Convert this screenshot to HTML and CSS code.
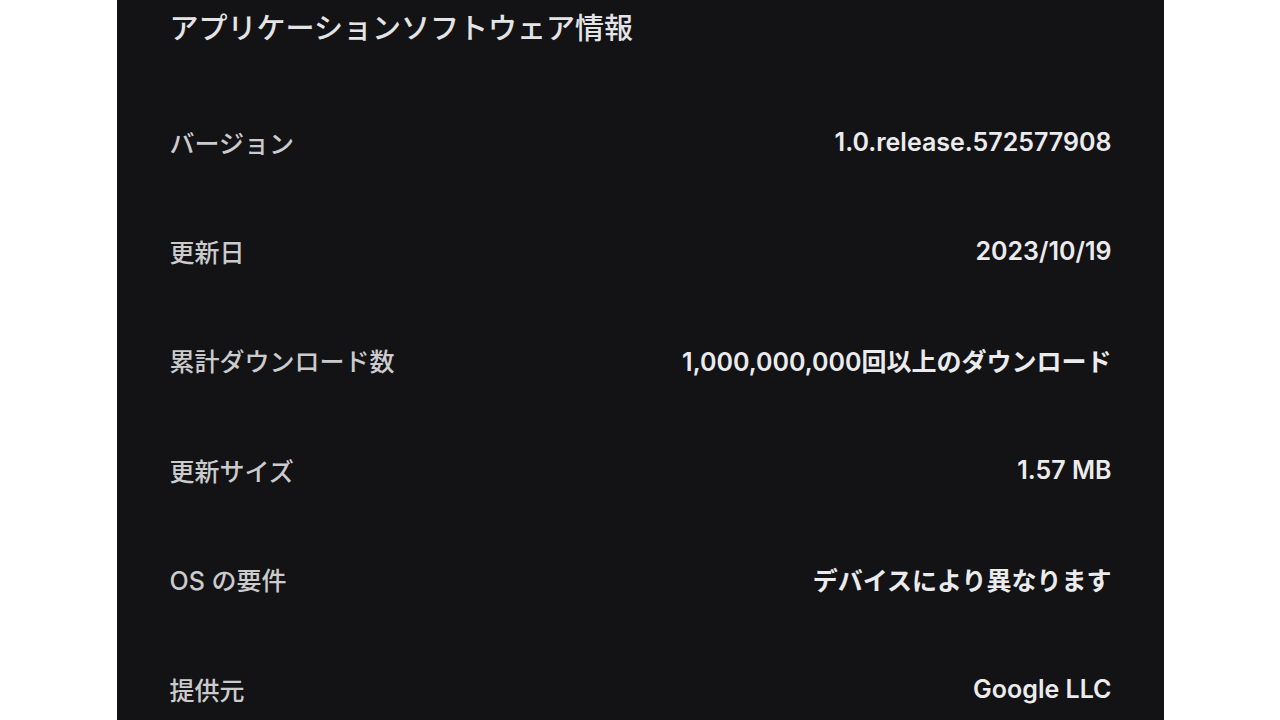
FILE: index.html
```html
<!DOCTYPE html>
<html lang="ja">
  <head>
    <meta charset="UTF-8" />
    <meta name="viewport" content="width=device-width, initial-scale=1.0" />
    <title>アプリケーションソフトウェア情報</title>
    <link rel="stylesheet" href="styles.css">
  </head>
  <body>
    <div class="panel">
      <h2 class="title">アプリケーションソフトウェア情報</h2>
      <div class="row">
        <span class="label">バージョン</span>
        <span class="value">1.0.release.572577908</span>
      </div>
      <div class="row">
        <span class="label">更新日</span>
        <span class="value">2023/10/19</span>
      </div>
      <div class="row">
        <span class="label">累計ダウンロード数</span>
        <span class="value">1,000,000,000回以上のダウンロード</span>
      </div>
      <div class="row">
        <span class="label">更新サイズ</span>
        <span class="value">1.57 MB</span>
      </div>
      <div class="row">
        <span class="label">OS の要件</span>
        <span class="value">デバイスにより異なります</span>
      </div>
      <div class="row">
        <span class="label">提供元</span>
        <span class="value">Google LLC</span>
      </div>
    </div>
  </body>
</html>
```

FILE: styles.css
```css
html,
body {
  margin: 0;
  height: 100%;
  background: #ffffff;
  overflow: hidden;
}
body {
  font-family: "Inter", "Noto Sans CJK JP", sans-serif;
}
.panel {
  width: 1047px;
  height: 720px;
  margin: 0 auto;
  padding: 0 52px 0 53px;
  box-sizing: border-box;
  background: #131315;
}
.title {
  margin: 0 0 30px;
  font-size: 29px;
  line-height: 57px;
  font-weight: 500;
  color: #e4e4e6;
}
.row {
  display: flex;
  justify-content: space-between;
  align-items: center;
  height: 109.4px;
  font-size: 25px;
}
.label {
  color: #cbcbce;
  font-weight: 500;
}
.value {
  color: #ebebed;
  font-weight: 600;
}
```
